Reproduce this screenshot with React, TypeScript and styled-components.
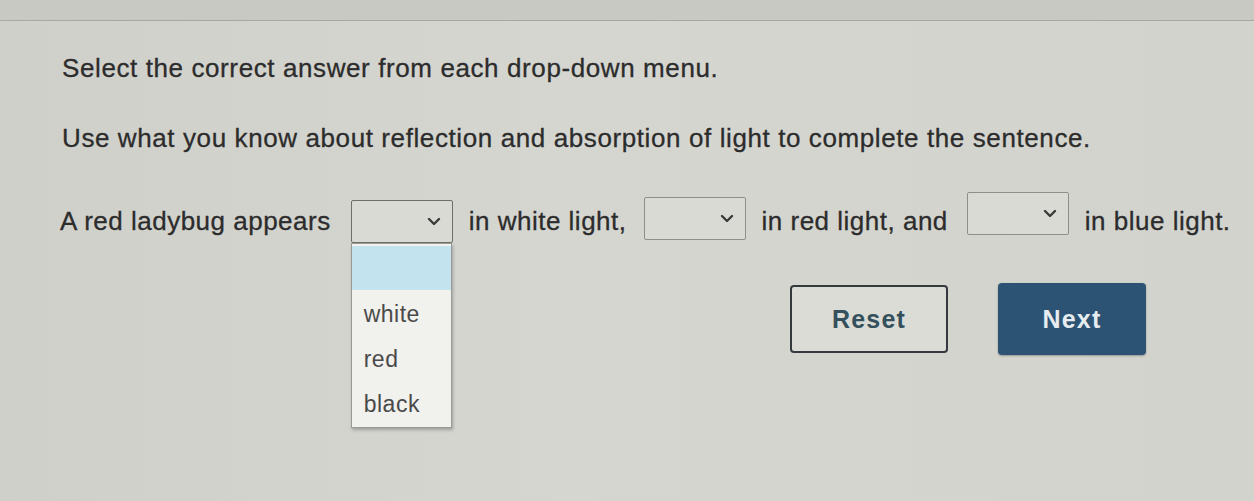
import React, { FunctionComponent } from 'react';
import styled, { createGlobalStyle } from 'styled-components';

const Global = createGlobalStyle`
  html, body {
    margin: 0;
    padding: 0;
    background: #d3d3cd;
  }
  body {
    font-family: 'Liberation Sans', Arial, sans-serif;
    color: #2c2c2c;
  }
`;

const S = {
  Page: styled.div`
    width: 1254px;
    height: 501px;
    overflow: hidden;
    background: linear-gradient(90deg, #d0d0ca 0%, #d6d6d1 45%, #d3d3ce 100%);
  `,

  TopStrip: styled.div`
    height: 20px;
    background: #c9c9c3;
    border-bottom: 1px solid #a8a8a2;
  `,

  Content: styled.div`
    display: flex;
    flex-direction: column;
    padding: 32px 0 0 62px;
  `,

  Prompt: styled.p`
    margin: 0;
    font-size: 26px;
    line-height: 30px;
    letter-spacing: 0.6px;
    -webkit-text-stroke: 0.3px #2c2c2c;
    & + & {
      margin-top: 40px;
    }
  `,

  Sentence: styled.div`
    display: flex;
    align-items: center;
    margin-top: 47px;
    margin-left: -2px;
    font-size: 26px;
    letter-spacing: 0.5px;
    -webkit-text-stroke: 0.3px #2c2c2c;
  `,

  Words: styled.span<{ $gap: number }>`
    margin-right: ${(p) => p.$gap}px;
    white-space: nowrap;
  `,

  SelectWrap: styled.div<{ $lift: number }>`
    position: relative;
    margin-right: 16px;
    transform: translateY(${(p) => p.$lift}px);
  `,

  SelectBox: styled.div<{ $open?: boolean }>`
    width: 102px;
    height: 43px;
    box-sizing: border-box;
    display: flex;
    align-items: center;
    justify-content: flex-end;
    padding-right: 11px;
    background: #dadad5;
    border: 1.5px solid ${(p) => (p.$open ? '#6f6f6a' : '#8f8f8a')};
    border-radius: 2px;
  `,

  Menu: styled.ul`
    position: absolute;
    top: 43px;
    left: 0;
    width: 101px;
    margin: 0;
    padding: 2px 0 0;
    list-style: none;
    background: #f1f1ee;
    border: 1px solid #9a9a96;
    box-shadow: 1px 2px 3px rgba(0, 0, 0, 0.25);
    box-sizing: border-box;
    -webkit-text-stroke: 0;
  `,

  Option: styled.li<{ $active?: boolean }>`
    height: ${(p) => (p.$active ? '44px' : '45px')};
    display: flex;
    align-items: center;
    padding-left: 12px;
    font-size: 23px;
    letter-spacing: 0.5px;
    color: #4a4a4a;
    background: ${(p) => (p.$active ? '#c3e3ee' : 'transparent')};
    margin-bottom: ${(p) => (p.$active ? '2px' : '0')};
  `,

  Actions: styled.div`
    display: flex;
    align-items: center;
    gap: 50px;
    margin: 40px 0 0 728px;
  `,

  Button: styled.button<{ $primary?: boolean }>`
    width: ${(p) => (p.$primary ? '148px' : '158px')};
    height: ${(p) => (p.$primary ? '72px' : '68px')};
    font-family: 'Liberation Sans', Arial, sans-serif;
    font-size: 25px;
    font-weight: 700;
    letter-spacing: 1.2px;
    border-radius: 4px;
    cursor: pointer;
    color: ${(p) => (p.$primary ? '#e6ecef' : '#34505c')};
    background: ${(p) => (p.$primary ? '#2c5373' : '#dcdcd7')};
    border: ${(p) => (p.$primary ? 'none' : '2px solid #33393c')};
    box-shadow: ${(p) => (p.$primary ? '0 1px 2px rgba(0,0,0,0.3)' : 'none')};
  `,
};

const Chevron: FunctionComponent = () => (
  <svg width="14" height="9" viewBox="0 0 14 9">
    <path d="M2 2 L7 7 L12 2" fill="none" stroke="#3a3a3a" strokeWidth="2.4" strokeLinecap="round" strokeLinejoin="round" />
  </svg>
);

const Dropdown: FunctionComponent<{ open?: boolean; lift: number }> = ({ open, lift }) => (
  <S.SelectWrap $lift={lift}>
    <S.SelectBox $open={open}>
      <Chevron />
    </S.SelectBox>
    {open && (
      <S.Menu>
        <S.Option $active />
        <S.Option>white</S.Option>
        <S.Option>red</S.Option>
        <S.Option>black</S.Option>
      </S.Menu>
    )}
  </S.SelectWrap>
);

const App: FunctionComponent = () => (
  <S.Page>
    <Global />
    <S.TopStrip />
    <S.Content>
      <S.Prompt>Select the correct answer from each drop-down menu.</S.Prompt>
      <S.Prompt>Use what you know about reflection and absorption of light to complete the sentence.</S.Prompt>

      <S.Sentence>
        <S.Words $gap={20}>A red ladybug appears</S.Words>
        <Dropdown open lift={0} />
        <S.Words $gap={17}>in white light,</S.Words>
        <Dropdown lift={-3} />
        <S.Words $gap={19}>in red light, and</S.Words>
        <Dropdown lift={-8} />
        <S.Words $gap={0}>in blue light.</S.Words>
      </S.Sentence>

      <S.Actions>
        <S.Button>Reset</S.Button>
        <S.Button $primary>Next</S.Button>
      </S.Actions>
    </S.Content>
  </S.Page>
);

export default App;
